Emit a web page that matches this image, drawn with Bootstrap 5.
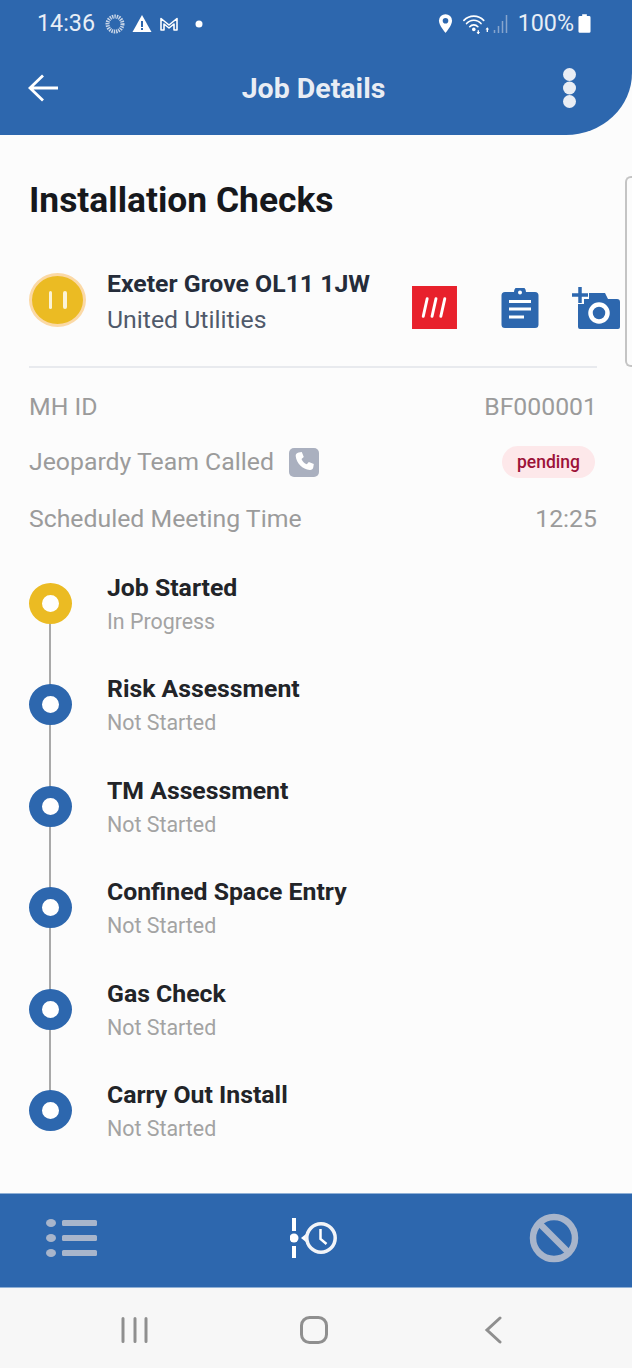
<!DOCTYPE html>
<html lang="en">
<head>
    <meta charset="UTF-8">
    <meta name="viewport" content="width=device-width, initial-scale=1.0">
    <title>Job Details</title>
    <link href="https://cdn.jsdelivr.net/npm/bootstrap@5.3.0/dist/css/bootstrap.min.css" rel="stylesheet">
    <style>
        body {
            background: #fcfcfc;
            font-family: Roboto, "Liberation Sans", sans-serif;
            height: 1368px;
            overflow: hidden;
        }
        .app-shell { height: 1368px; }
        .top-head {
            background: #2d67ae;
            height: 135px;
            border-bottom-right-radius: 66px 62px;
            color: #fff;
            padding: 0 56px 0 28px;
        }
        .status-row { height: 46px; padding-top: 1px; margin-right: -15px; padding-left: 9px; font-size: 23.3px; color: #e8eef6; }
        .title-row { height: 89px; padding-bottom: 6px; }
        .page-title { font-size: 28.5px; font-weight: 700; color: #e9edf4; margin: 3px 0 0 4px; }
        .main-area { padding: 0 35px 0 29px; position: relative; }
        .check-title { font-size: 35.4px; font-weight: 700; color: #16181c; margin: 45px 0 0; line-height: 40px; }
        .site-row { height: 148px; border-bottom: 2px solid #e8eaee; padding-top: 49px; }
        .pause-dot {
            width: 57px; height: 54px; border-radius: 50%; background: #ebbb23;
            border: 3px solid #fbd9a6; gap: 11px; margin: 4px 21px 0 0;
        }
        .pause-dot span { width: 3.5px; height: 18px; background: #fbf3d6; border-radius: 2px; }
        .site-name { font-size: 24.8px; font-weight: 700; color: #252c3a; line-height: 30px; }
        .site-owner { font-size: 24.8px; color: #505a6b; line-height: 30px; margin-top: 6px; }
        .action-icons { margin: 17px -23px 0 auto; }
        .info-row { font-size: 24.8px; color: #9b9b9b; line-height: 30px; height: 30px; }
        .info-row-b { margin-top: 25px; }
        .info-row-c { margin-top: 27px; }
        .call-box { width: 30px; height: 29px; border-radius: 5px; background: #aab0bf; margin-left: 15px; }
        .pending-pill {
            background: #fde8ea; color: #9c1238; font-size: 17.5px; font-weight: 500;
            border-radius: 16px; height: 32px; width: 93px; margin-right: 2px;
        }
        .step-list { margin-top: 39px; }
        .step-item { height: 101.4px; position: relative; padding-left: 78px; }
        .step-item:not(:last-child)::before {
            content: ""; position: absolute; left: 20px; top: 40px; bottom: -20px; width: 2px; background: #a9a9a9;
        }
        .step-dot {
            position: absolute; left: 0; top: 10px; width: 43px; height: 41px; border-radius: 50%;
            border-style: solid; border-width: 12px 13px; border-color: #2d67ae; background: #fff;
        }
        .step-dot.is-active { border-color: #ebbb23; }
        .step-name { font-size: 24.8px; font-weight: 700; color: #222428; line-height: 30px; }
        .step-state { font-size: 21.4px; color: #a3a3a3; line-height: 26px; margin-top: 6px; }
        .bottom-tabs {
            height: 95px; background: #2d67ae; padding-bottom: 6px;
            border-top: 1px solid #8fb0d6; border-bottom: 1px solid #8fb0d6;
        }
        .sys-nav { height: 80px; background: #f7f7f7; padding-top: 4px; }
        .scroll-tab {
            position: absolute; right: 0; top: 41px; width: 7px; height: 191px;
            border: 2px solid #c4c4c4; border-right: 0; border-radius: 6px 0 0 6px;
        }
    </style>
</head>
<body>
    <div class="app-shell d-flex flex-column">
        <!-- header -->
        <div class="top-head flex-shrink-0">
            <div class="status-row d-flex align-items-center">
                <span>14:36</span>
                <svg style="margin-left:9px" width="22" height="22" viewBox="0 0 22 22"><circle cx="11" cy="11" r="7.500" fill="none" stroke="#c9d6e8" stroke-width="4" stroke-dasharray="1.400 .9"/></svg>
                <svg style="margin-left:6px" width="20" height="20" viewBox="0 0 20 20"><path d="M10 1 19.500 18H.5z" fill="#fff"/><path d="M9 7h2v6H9zM9 14h2v2H9z" fill="#2d67ae"/></svg>
                <svg style="margin-left:7px" width="20" height="18" viewBox="0 0 20 18"><path d="M2 15V3.500L10 10l8-6.500V15h-3V9l-5 4-5-4v6z" fill="none" stroke="#fff" stroke-width="1.600" stroke-linejoin="round"/></svg>
                <svg style="margin-left:16px" width="8" height="8" viewBox="0 0 8 8"><circle cx="4" cy="4" r="3.500" fill="#fff"/></svg>
                <svg class="ms-auto" width="15" height="19" viewBox="0 0 16 20"><path d="M8 0a7 7 0 0 0-7 7c0 5 7 13 7 13s7-8 7-13a7 7 0 0 0-7-7z" fill="#fff"/><circle cx="8" cy="7" r="3" fill="#2d67ae"/></svg>
                <svg style="margin-left:10px" width="27" height="22" viewBox="0 0 30 24"><g fill="none" stroke="#fff" stroke-width="1.800" stroke-linecap="round"><path d="M1 8a15 15 0 0 1 22 0M4 11.500a10.500 10.500 0 0 1 16 0M7.500 15a6 6 0 0 1 9 0"/></g><circle cx="12" cy="18" r="2" fill="#fff"/><path d="M17 19v4M27 17v4" stroke="#fff" stroke-width="1.500"/><path d="M15 21l2 2.500 2-2.500zM25 18l2-2.500 2 2.500z" fill="#fff"/></svg>
                <svg style="margin-left:3px" width="16" height="20" viewBox="0 0 15 20"><path d="M1 19v-3M5 19v-7M9 19V7M13 19V1" stroke="#86a5cd" stroke-width="1.500"/></svg>
                <span style="margin-left:9px">100%</span>
                <svg style="margin-left:4px" width="13" height="19" viewBox="0 0 14 20"><path d="M4.500 0h5v2H12a1.500 1.500 0 0 1 1.500 1.500V18.500A1.500 1.500 0 0 1 12 20H2A1.500 1.500 0 0 1 .5 18.500V3.500A1.500 1.500 0 0 1 2 2h2.500z" fill="#fff"/></svg>
            </div>
            <div class="title-row d-flex align-items-center justify-content-between">
                <svg width="32" height="28" viewBox="0 0 32 28"><path d="M30 14H3M15 1.500 2 14l13 12.500" fill="none" stroke="#fff" stroke-width="2.800"/></svg>
                <h1 class="page-title">Job Details</h1>
                <svg width="13" height="40" viewBox="0 0 13 40"><circle cx="6.500" cy="6.500" r="6.500" fill="#e9edf4"/><circle cx="6.500" cy="20" r="6.500" fill="#e9edf4"/><circle cx="6.500" cy="33.500" r="6.500" fill="#e9edf4"/></svg>
            </div>
        </div>

        <!-- content -->
        <div class="main-area flex-grow-1">
            <h2 class="check-title">Installation Checks</h2>
            <div class="site-row d-flex align-items-start">
                <div class="pause-dot d-flex align-items-center justify-content-center flex-shrink-0"><span></span><span></span></div>
                <div>
                    <div class="site-name">Exeter Grove OL11 1JW</div>
                    <div class="site-owner">United Utilities</div>
                </div>
                <div class="action-icons d-flex align-items-center flex-shrink-0">
                    <svg width="45" height="43" viewBox="0 0 46 44"><rect width="46" height="44" fill="#e8212c"/><path d="M11.500 31 15.500 13M20.500 31l4-18M29.500 31l4-18" stroke="#fff" stroke-width="3" stroke-linecap="round"/></svg>
                    <svg style="margin-left:44px" width="38" height="40" viewBox="0 0 38 40"><path d="M4 4h9a6 6 0 0 1 12 0h9a3.500 3.500 0 0 1 3.500 3.500v29A3.500 3.500 0 0 1 34 40H4a3.500 3.500 0 0 1-3.500-3.500v-29A3.500 3.500 0 0 1 4 4z" fill="#2d67ae"/><circle cx="19" cy="4.500" r="2" fill="#fff"/><path d="M8 13.500h22M8 21h22M8 29h15" stroke="#fff" stroke-width="3"/></svg>
                    <svg style="margin-left:33px" width="48" height="42" viewBox="0 0 48 42"><path d="M15 12l2-6h16l3 6h9a3 3 0 0 1 3 3v25a2 2 0 0 1-2 2H8a2 2 0 0 1-2-2V12z" fill="#2d67ae"/><circle cx="27" cy="26" r="8.500" fill="none" stroke="#fff" stroke-width="4.500"/><path d="M0 8h17M8 0v17" stroke="#fcfcfc" stroke-width="8"/><path d="M0 8h16M8 0v16" stroke="#2d67ae" stroke-width="3.500"/></svg>
                </div>
            </div>
            <div class="info-row d-flex justify-content-between mt-4"><span>MH ID</span><span>BF000001</span></div>
            <div class="info-row info-row-b d-flex align-items-center">
                <span>Jeopardy Team Called</span>
                <span class="call-box d-flex align-items-center justify-content-center">
                    <svg width="24" height="24" viewBox="0 0 24 24"><path d="M6.600 2.500 9.800 2l2 5-2.300 2c1 2.500 2.800 4.300 5.300 5.300l2-2.300 5 2-.5 3.200c-.3 1.800-1.700 3-3.500 2.800C10.500 19.300 4.500 13.400 3.700 6c-.2-1.800 1.100-3.200 2.900-3.500z" fill="#fff"/></svg>
                </span>
                <span class="pending-pill d-flex align-items-center justify-content-center ms-auto">pending</span>
            </div>
            <div class="info-row info-row-c d-flex justify-content-between"><span>Scheduled Meeting Time</span><span>12:25</span></div>

            <div class="step-list">
                <div class="step-item"><div class="step-dot is-active"></div><div class="step-name">Job Started</div><div class="step-state">In Progress</div></div>
                <div class="step-item"><div class="step-dot"></div><div class="step-name">Risk Assessment</div><div class="step-state">Not Started</div></div>
                <div class="step-item"><div class="step-dot"></div><div class="step-name">TM Assessment</div><div class="step-state">Not Started</div></div>
                <div class="step-item"><div class="step-dot"></div><div class="step-name">Confined Space Entry</div><div class="step-state">Not Started</div></div>
                <div class="step-item"><div class="step-dot"></div><div class="step-name">Gas Check</div><div class="step-state">Not Started</div></div>
                <div class="step-item"><div class="step-dot"></div><div class="step-name">Carry Out Install</div><div class="step-state">Not Started</div></div>
            </div>
            <div class="scroll-tab"></div>
        </div>

        <!-- bottom bar -->
        <div class="bottom-tabs d-flex align-items-center flex-shrink-0">
            <svg style="margin-left:46px" width="52" height="38" viewBox="0 0 52 38"><g fill="#a8b5cb"><ellipse cx="5" cy="4" rx="5" ry="4"/><ellipse cx="5" cy="19" rx="5" ry="4"/><ellipse cx="5" cy="34" rx="5" ry="4"/><rect x="16" y="1" width="35" height="6" rx="1.500"/><rect x="16" y="16" width="35" height="6" rx="1.500"/><rect x="16" y="31" width="35" height="6" rx="1.500"/></g></svg>
            <svg style="margin-left:192px" width="50" height="50" viewBox="0 0 50 50"><g fill="#fff"><rect x="2" y="5" width="4" height="13"/><rect x="2" y="33" width="4" height="12"/><circle cx="4" cy="25" r="4.500"/><path d="M11 25l5-4v8z"/></g><circle cx="31" cy="25" r="14.200" fill="none" stroke="#f2f4f8" stroke-width="3.500"/><path d="M30.500 16v10l6 5" fill="none" stroke="#fff" stroke-width="2.500"/></svg>
            <svg style="margin-left:189px" width="50" height="50" viewBox="0 0 50 50"><circle cx="25" cy="25" r="21" fill="none" stroke="#a8b5cb" stroke-width="6.500"/><path d="M10 10l30 30" stroke="#a8b5cb" stroke-width="6.500"/></svg>
        </div>
        <!-- android nav -->
        <div class="sys-nav d-flex align-items-center flex-shrink-0">
            <svg style="margin-left:120px" width="28" height="26" viewBox="0 0 28 26"><path d="M3 1.500v23M15 1.500v23M26 1.500v23" stroke="#8f8f8f" stroke-width="3" stroke-linecap="round"/></svg>
            <svg style="margin-left:152px" width="28" height="28" viewBox="0 0 28 28"><rect x="1.500" y="1.500" width="25" height="25" rx="8" fill="none" stroke="#8f8f8f" stroke-width="3"/></svg>
            <svg style="margin-left:154px" width="20" height="30" viewBox="0 0 20 30"><path d="M18 3 5 15l13 12" fill="none" stroke="#8f8f8f" stroke-width="3" stroke-linecap="round"/></svg>
        </div>
    </div>

    <script src="https://cdn.jsdelivr.net/npm/bootstrap@5.3.0/dist/js/bootstrap.bundle.min.js"></script>
</body>
</html>
